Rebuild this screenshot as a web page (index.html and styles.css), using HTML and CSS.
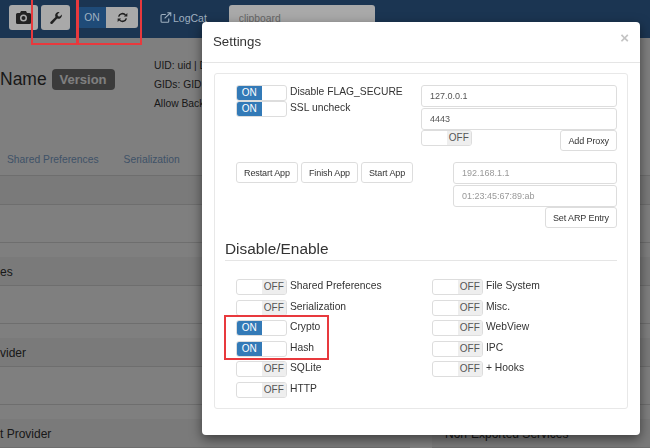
FILE: index.html
```html
<!DOCTYPE html>
<html lang="en">

<head>
  <meta charset="UTF-8">
  <title>Settings</title>
  <link rel="stylesheet" href="styles.css">
</head>

<body>
  <nav class="navbar">
    <button class="nav-btn cam">
      <svg width="15" height="13" viewBox="0 0 15 13"><path fill="#222" fill-rule="evenodd" d="M5 0h5l1 2h2.500a1.500 1.500 0 0 1 1.500 1.500v8a1.500 1.500 0 0 1-1.500 1.500h-12a1.500 1.500 0 0 1-1.500-1.500v-8a1.500 1.500 0 0 1 1.500-1.500h2.500zM7.500 3.500a3.500 3.500 0 1 0 0 7 3.500 3.500 0 0 0 0-7zM7.500 5a2 2 0 1 1 0 4 2 2 0 0 1 0-4z"/></svg>
    </button>
    <button class="nav-btn wrench">
      <svg width="12" height="12" viewBox="0 0 13 13"><path fill="#222" d="M12.800 2.800a3.800 3.800 0 0 1-5 4.300l-4.900 5.400a1.400 1.400 0 0 1-2.200-2l5.300-5a3.800 3.800 0 0 1 4.400-5.300l-2.300 2.300 0.500 2 2 0.500z"/></svg>
    </button>
    <div class="nav-switch">
      <span class="nav-on">ON</span>
      <span class="nav-refresh">
        <svg width="11" height="11" viewBox="0 0 12 12"><path fill="none" stroke="#222" stroke-width="1.700" d="M1.800 5a4.300 4.300 0 0 1 7.500-1.600M10.200 7a4.300 4.300 0 0 1-7.500 1.600"/><path fill="#222" d="M7.500 4.800h3.800v-3.800zM4.500 7.200h-3.800v3.800z"/></svg>
      </span>
    </div>
    <a class="logcat">
      <svg width="12" height="11" viewBox="0 0 13 12"><path fill="none" stroke="#9fb0c0" stroke-width="1.200" d="M9.500 7v3a1.200 1.200 0 0 1-1.200 1.200h-6a1.200 1.200 0 0 1-1.200-1.200v-6a1.200 1.200 0 0 1 1.200-1.200h4M5 7l6.500-6.200M8 .8h3.700v3.700"/></svg>
      LogCat
    </a>
    <input class="nav-search" placeholder="clipboard">
  </nav>

  <header class="app-head">
    <h1 class="app-name">Name <span class="version">Version</span></h1>
    <div class="app-info">
      <p>UID: uid | D</p>
      <p>GIDs: GID</p>
      <p>Allow Back</p>
    </div>
  </header>

  <div class="tabs">
    <a>Shared Preferences</a>
    <a>Serialization</a>
  </div>

  <div class="lists">
    <div class="list">
      <div class="list-head"></div>
      <div class="list-body"></div>
      <div class="list-head">es</div>
      <div class="list-body"></div>
      <div class="list-head">vider</div>
      <div class="list-body"></div>
      <div class="list-head">t Provider</div>
    </div>
    <div class="list side">
      <div class="list-head"></div>
      <div class="list-body"></div>
      <div class="list-head"></div>
      <div class="list-body"></div>
      <div class="list-head"></div>
      <div class="list-body"></div>
      <div class="list-head">Non-Exported Services</div>
    </div>
  </div>

  <div class="backdrop"></div>

  <div class="modal">
    <div class="modal-head">
      <h4>Settings</h4>
      <span class="close">&times;</span>
    </div>
    <div class="panel">
      <div class="top-row">
        <div class="toggles">
          <div class="toggle tight"><span class="sw on"><b>ON</b><i></i></span>Disable FLAG_SECURE</div>
          <div class="toggle tight"><span class="sw on"><b>ON</b><i></i></span>SSL uncheck</div>
        </div>
        <div class="proxy">
          <input class="field dark-text" value="127.0.0.1">
          <input class="field dark-text" value="4443">
          <div class="form-foot">
            <span class="sw off"><i></i><b>OFF</b></span>
            <button class="btn">Add Proxy</button>
          </div>
        </div>
      </div>
      <div class="mid-row">
        <div class="app-btns">
          <button class="btn">Restart App</button>
          <button class="btn">Finish App</button>
          <button class="btn">Start App</button>
        </div>
        <div class="arp">
          <input class="field" placeholder="192.168.1.1">
          <input class="field" placeholder="01:23:45:67:89:ab">
          <div class="form-foot end">
            <button class="btn">Set ARP Entry</button>
          </div>
        </div>
      </div>
      <h3 class="section">Disable/Enable</h3>
      <div class="hooks">
        <div class="hook-col">
          <div class="toggle"><span class="sw off"><i></i><b>OFF</b></span>Shared Preferences</div>
          <div class="toggle"><span class="sw off"><i></i><b>OFF</b></span>Serialization</div>
          <div class="toggle"><span class="sw on"><b>ON</b><i></i></span>Crypto</div>
          <div class="toggle"><span class="sw on"><b>ON</b><i></i></span>Hash</div>
          <div class="toggle"><span class="sw off"><i></i><b>OFF</b></span>SQLite</div>
          <div class="toggle"><span class="sw off"><i></i><b>OFF</b></span>HTTP</div>
        </div>
        <div class="hook-col">
          <div class="toggle"><span class="sw off"><i></i><b>OFF</b></span>File System</div>
          <div class="toggle"><span class="sw off"><i></i><b>OFF</b></span>Misc.</div>
          <div class="toggle"><span class="sw off"><i></i><b>OFF</b></span>WebView</div>
          <div class="toggle"><span class="sw off"><i></i><b>OFF</b></span>IPC</div>
          <div class="toggle"><span class="sw off"><i></i><b>OFF</b></span>+ Hooks</div>
        </div>
      </div>
    </div>
  </div>

  <div class="mark mark-wrench"></div>
  <div class="mark mark-switch"></div>
  <div class="mark mark-crypto"></div>
</body>

</html>
```

FILE: styles.css
```css
body {
  margin: 0;
  height: 448px;
  overflow: hidden;
  background: #fff;
  color: #333;
  font-family: "Liberation Sans", Arial, sans-serif;
  font-size: 10.300px;
}

button,
input {
  font-family: inherit;
}

/* navbar sits above the backdrop, its colours are already dimmed */
.navbar {
  position: relative;
  z-index: 1;
  display: flex;
  align-items: flex-start;
  height: 33px;
  padding: 5px 0 0 9px;
  background: #1b3552;
}

.nav-btn {
  width: 29px;
  height: 25px;
  margin-right: 3px;
  padding: 0;
  border: none;
  border-radius: 3px;
  background: #a9a9a9;
  display: flex;
  align-items: center;
  justify-content: center;
}

.wrench {
  margin-right: 7px;
}

.nav-switch {
  display: flex;
  width: 61px;
  height: 21px;
  margin-top: 2px;
  border-radius: 3px;
  overflow: hidden;
}

.nav-on {
  width: 28px;
  padding-left: 1px;
  background: #1f4b78;
  color: #9fb0c0;
  line-height: 21px;
  text-align: center;
}

.nav-refresh {
  flex: 1;
  background: #a9a9a9;
  display: flex;
  align-items: center;
  justify-content: center;
}

.logcat {
  display: flex;
  align-items: center;
  gap: 1px;
  height: 25px;
  margin-left: 22px;
  color: #9fb0c0;
  font-size: 10.500px;
}

.nav-search {
  width: 146px;
  height: 27px;
  box-sizing: border-box;
  margin-left: 22px;
  padding: 0 10px;
  border: none;
  border-radius: 3px;
  background: #a9a9a9;
  font-size: 10.300px;
}

.nav-search::placeholder {
  color: #666;
}

/* page under the dialog */
.app-head {
  display: flex;
  height: 84px;
  overflow: hidden;
}

.app-name {
  width: 154px;
  margin: 31px 0 0;
  font-size: 17.500px;
  font-weight: normal;
  white-space: nowrap;
}

.version {
  display: inline-block;
  padding: 3px 8px;
  border-radius: 4px;
  background: #777;
  color: #fff;
  font-size: 13px;
  font-weight: bold;
  vertical-align: 1px;
}

.app-info {
  padding-top: 21px;
}

.app-info p {
  margin: 0 0 5px;
  line-height: 14px;
}

.tabs {
  display: flex;
  gap: 25px;
  height: 54px;
  box-sizing: border-box;
  padding: 32px 0 0 7px;
  border-bottom: 1px solid #ddd;
  color: #7fa5d0;
}

.lists {
  display: grid;
  grid-template-columns: 410px 1fr;
  gap: 22px;
}

.list-head {
  height: 29px;
  background: #f5f5f5;
  border-bottom: 1px solid #ddd;
  box-sizing: border-box;
  font-size: 12px;
  line-height: 31px;
}

.list-body {
  height: 52px;
  background: linear-gradient(#fff 37px, #ddd 37px, #ddd 38px, #fff 38px);
}

.side .list-head {
  padding-left: 13px;
  white-space: nowrap;
}

.backdrop {
  position: fixed;
  inset: 0;
  background: rgba(0, 0, 0, 0.5);
}

/* settings dialog */
.modal {
  position: absolute;
  z-index: 2;
  left: 202px;
  top: 22px;
  width: 438px;
  height: 413px;
  box-sizing: border-box;
  background: #fff;
  border-radius: 4px;
  box-shadow: 0 4px 12px rgba(0, 0, 0, 0.5);
}

.modal-head {
  display: flex;
  justify-content: space-between;
  height: 40px;
  padding: 0 11px;
  border-bottom: 1px solid #e5e5e5;
}

.modal-head h4 {
  margin: 10px 0 0;
  font-size: 13.300px;
  font-weight: normal;
  line-height: 19px;
}

.close {
  margin-top: 7px;
  color: #c4c4c4;
  font-size: 15px;
  font-weight: bold;
}

.panel {
  height: 336px;
  box-sizing: border-box;
  margin: 10px 12px 0;
  padding: 11px 10px 0 21px;
  border: 1px solid #e8e8e8;
  border-radius: 3px;
}

.top-row,
.mid-row {
  display: flex;
  justify-content: space-between;
}

.mid-row {
  margin-top: 11px;
}

.proxy {
  width: 196px;
}

.arp {
  width: 164px;
}

.field {
  display: block;
  width: 100%;
  height: 22px;
  box-sizing: border-box;
  padding: 0 8px;
  border: 1px solid #ddd;
  border-radius: 3px;
  color: #555;
  font-size: 9px;
}

.field:first-child {
  margin-bottom: 1px;
}

.field::placeholder {
  color: #999;
}

.form-foot {
  display: flex;
  justify-content: space-between;
  align-items: flex-start;
}

.form-foot.end {
  justify-content: flex-end;
}

.btn {
  height: 21px;
  padding: 0 7px;
  border: 1px solid #ddd;
  border-radius: 3px;
  background: #fff;
  color: #333;
  font-size: 9px;
  letter-spacing: -0.100px;
  white-space: nowrap;
}

.app-btns {
  display: flex;
  gap: 3px;
}

.toggle {
  display: flex;
  align-items: flex-start;
  gap: 3px;
  height: 20.600px;
  line-height: 14px;
}

.toggle.tight {
  height: 16px;
  line-height: 13px;
}

.sw {
  display: flex;
  width: 51px;
  height: 16px;
  box-sizing: border-box;
  border: 1px solid #ddd;
  border-radius: 3px;
  overflow: hidden;
  font-size: 10px;
  line-height: 14px;
}

.sw b,
.sw i {
  width: 50%;
  text-align: center;
  font-weight: normal;
}

.sw.on b {
  background: #337ab7;
  color: #fff;
}

.sw.off b {
  background: #eee;
  color: #555;
}

.section {
  margin: 11px 0 0 -11px;
  padding-bottom: 1px;
  border-bottom: 1px solid #e5e5e5;
  font-size: 15.400px;
  font-weight: normal;
  line-height: 20px;
}

.hooks {
  display: grid;
  grid-template-columns: 196px 1fr;
  margin-top: 18px;
}

/* red annotations drawn over the screenshot */
.mark {
  position: absolute;
  z-index: 3;
  box-sizing: border-box;
  border: 2px solid #e8393d;
}

.mark-wrench {
  left: 31px;
  top: -2px;
  width: 47px;
  height: 47px;
}

.mark-switch {
  left: 77px;
  top: -2px;
  width: 65px;
  height: 47px;
}

.mark-crypto {
  left: 224px;
  top: 315px;
  width: 105px;
  height: 45px;
}
```
